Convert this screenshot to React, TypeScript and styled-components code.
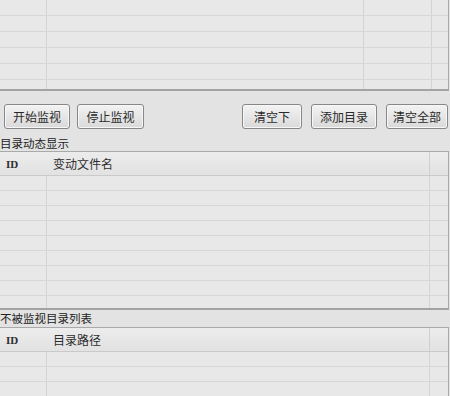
import React from "react";
import styled, { createGlobalStyle } from "styled-components";

const Global = createGlobalStyle`
  html, body { margin: 0; padding: 0; background: #e3e3e3; }
  body { font-family: "Noto Sans CJK SC", "Noto Sans", sans-serif; color: #2a2a2a; }
`;

const Page = styled.div`
  width: 450px;
  height: 396px;
  overflow: hidden;
  display: flex;
  flex-direction: column;
  background: #e3e3e3;
`;

const TableBox = styled.div<{ $h: number; $top?: boolean }>`
  width: 448px;
  height: ${(p) => p.$h}px;
  flex: none;
  background: #e8e8e8;
  border-right: 1px solid #a9a9a9;
  border-bottom: 2px solid #a3a3a3;
  border-top: ${(p) => (p.$top ? "1px solid #a9a9a9" : "none")};
  overflow: hidden;
  display: flex;
  flex-direction: column;
`;

const Row = styled.div<{ $h: number; $cols: string }>`
  flex: none;
  height: ${(p) => p.$h}px;
  display: grid;
  grid-template-columns: ${(p) => p.$cols};
  border-bottom: 1px solid #d7d7d7;
`;

const Cell = styled.div<{ $line?: boolean }>`
  border-right: ${(p) => (p.$line ? "1px solid #d4d4d4" : "none")};
`;

const HeaderRow = styled.div<{ $cols: string }>`
  flex: none;
  height: 23px;
  display: grid;
  grid-template-columns: ${(p) => p.$cols};
  background: linear-gradient(#ececec, #e2e2e2);
  border-bottom: 1px solid #cacaca;
  align-items: center;
`;

const HeadCell = styled.div<{ $line?: boolean; $serif?: boolean }>`
  height: 100%;
  display: flex;
  align-items: center;
  padding-left: 6px;
  font-family: ${(p) =>
    p.$serif ? '"Liberation Serif", serif' : '"Noto Sans CJK SC", sans-serif'};
  font-size: ${(p) => (p.$serif ? 11 : 12)}px;
  font-weight: ${(p) => (p.$serif ? 700 : 400)};
  color: #2e2e2e;
  border-right: ${(p) => (p.$line ? "1px solid #cfcfcf" : "none")};
  box-sizing: border-box;
`;

const Toolbar = styled.div`
  flex: none;
  height: 44px;
  display: flex;
  align-items: flex-start;
  justify-content: space-between;
  padding: 13px 2px 0 4px;
  box-sizing: border-box;
  width: 450px;
`;

const Group = styled.div<{ $gap: number }>`
  display: flex;
  gap: ${(p) => p.$gap}px;
`;

const Button = styled.button<{ $w: number }>`
  width: ${(p) => p.$w}px;
  height: 25px;
  padding: 0;
  border: 1px solid #878787;
  border-radius: 3px;
  background: linear-gradient(#f3f3f3, #d9d9d9);
  box-shadow: inset 0 0 0 1px #f7f7f7;
  font-family: "Noto Sans CJK SC", sans-serif;
  font-size: 12px;
  color: #2a2a2a;
  display: flex;
  align-items: center;
  justify-content: center;
`;

const Label = styled.div<{ $h: number }>`
  flex: none;
  height: ${(p) => p.$h}px;
  font-size: 11.5px;
  line-height: ${(p) => p.$h}px;
  color: #222;
`;

const topCols = "47px 317px 68px 1fr";
const midCols = "47px 1fr 18px";

function Rows({ n, h, cols, lines }: { n: number; h: number; cols: string; lines: boolean[] }) {
  return (
    <>
      {Array.from({ length: n }).map((_, i) => (
        <Row key={i} $h={h} $cols={cols}>
          {lines.map((l, j) => (
            <Cell key={j} $line={l} />
          ))}
        </Row>
      ))}
    </>
  );
}

export default function App() {
  return (
    <Page>
      <Global />
      <TableBox $h={89}>
        <Rows n={6} h={15} cols={topCols} lines={[true, true, true, false]} />
      </TableBox>
      <Toolbar>
        <Group $gap={7}>
          <Button $w={66}>开始监视</Button>
          <Button $w={67}>停止监视</Button>
        </Group>
        <Group $gap={9}>
          <Button $w={60}>清空下</Button>
          <Button $w={66}>添加目录</Button>
          <Button $w={62}>清空全部</Button>
        </Group>
      </Toolbar>
      <Label $h={16}>目录动态显示</Label>
      <TableBox $h={156} $top>
        <HeaderRow $cols={midCols}>
          <HeadCell $serif>ID</HeadCell>
          <HeadCell $line>变动文件名</HeadCell>
          <HeadCell />
        </HeaderRow>
        <Rows n={9} h={14} cols={midCols} lines={[true, true, false]} />
      </TableBox>
      <Label $h={17}>不被监视目录列表</Label>
      <TableBox $h={80} $top>
        <HeaderRow $cols={midCols}>
          <HeadCell $serif>ID</HeadCell>
          <HeadCell $line>目录路径</HeadCell>
          <HeadCell />
        </HeaderRow>
        <Rows n={4} h={14} cols={midCols} lines={[true, true, false]} />
      </TableBox>
    </Page>
  );
}
